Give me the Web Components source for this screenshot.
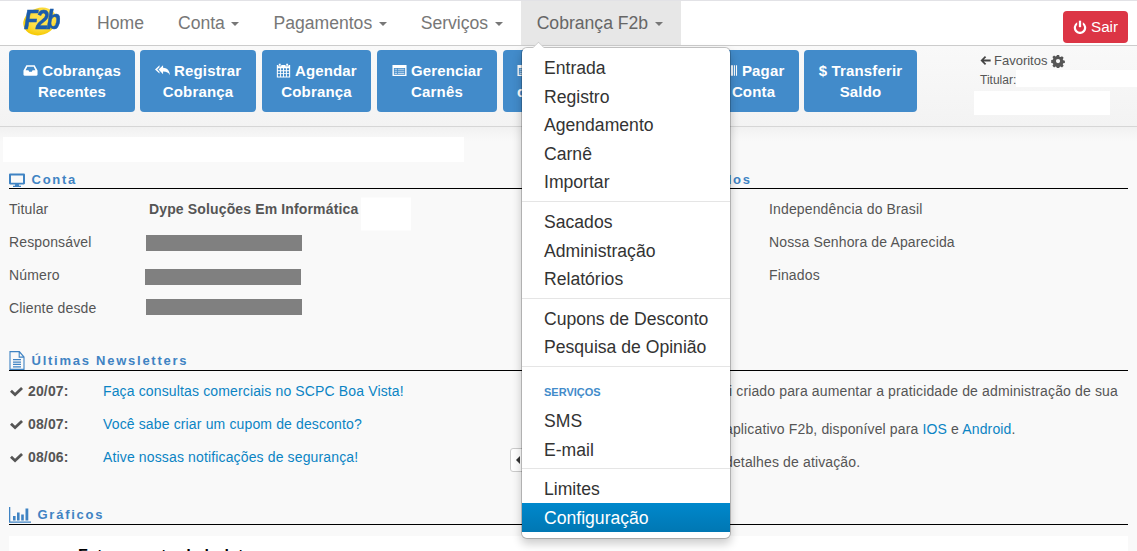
<!DOCTYPE html>
<html lang="pt-BR">
<head>
<meta charset="utf-8">
<title>F2b</title>
<style>
  html, body { margin: 0; height: 551px; overflow: hidden; background: #f9f9f9; }
  body { font: 14px/20px "Liberation Sans", Arial, sans-serif; color: #555; }
  a { color: #0b84c4; text-decoration: none; }
</style>
</head>
<body>
<app-page>
  <app-navbar slot="navbar">
    <nav-link>Home</nav-link>
    <nav-link caret>Conta</nav-link>
    <nav-link caret>Pagamentos</nav-link>
    <nav-link caret>Serviços</nav-link>
    <nav-link caret active>Cobrança F2b</nav-link>
    <sair-button slot="right">Sair</sair-button>
  </app-navbar>

  <dropdown-menu slot="menu">
    <menu-item>Entrada</menu-item>
    <menu-item>Registro</menu-item>
    <menu-item>Agendamento</menu-item>
    <menu-item>Carnê</menu-item>
    <menu-item>Importar</menu-item>
    <menu-divider style="--mb:6.25px"></menu-divider>
    <menu-item>Sacados</menu-item>
    <menu-item>Administração</menu-item>
    <menu-item>Relatórios</menu-item>
    <menu-divider style="--mb:6.1px"></menu-divider>
    <menu-item>Cupons de Desconto</menu-item>
    <menu-item>Pesquisa de Opinião</menu-item>
    <menu-divider style="--mb:0px"></menu-divider>
    <menu-item header>Serviços</menu-item>
    <menu-item>SMS</menu-item>
    <menu-item style="--lift:1px">E-mail</menu-item>
    <menu-divider style="--mb:5.75px"></menu-divider>
    <menu-item>Limites</menu-item>
    <menu-item active>Configuração</menu-item>
  </dropdown-menu>

  <tool-bar slot="toolbar">
    <tool-button icon="inbox" style="--w:126px">Cobranças<br>Recentes</tool-button>
    <tool-button icon="replyAll" style="--w:116px;margin-left:-1px">Registrar<br>Cobrança</tool-button>
    <tool-button icon="calendar" style="--w:109px">Agendar<br>Cobrança</tool-button>
    <tool-button icon="listAlt" style="--w:120px">Gerenciar<br>Carnês</tool-button>
    <tool-button icon="listAlt" style="--w:199px;--align:left;--pad:14px">Importar Arquivos<br>cobranças em lote</tool-button>
    <tool-button icon="barcode" style="--w:91px">Pagar<br>Conta</tool-button>
    <tool-button glyph="$" style="--w:113px;margin-left:-1px">Transferir<br>Saldo</tool-button>
    <favorites-panel slot="right"></favorites-panel>
  </tool-bar>

  <white-block style="--x:3px;--w:461px;--h:25px;margin-top:10px"></white-block>

  <two-columns style="margin-top:8px;--t:2px;--b:0px">
    <dash-section icon="desktop" heading="Conta">
      <info-row label="Titular"><b>Dype Soluções Em Informática</b><white-block style="--x:3px;--y:4.5px;--w:50px;--h:33px"></white-block></info-row>
      <info-row label="Responsável"><redact-bar style="--x:-3px;--y:1px"></redact-bar></info-row>
      <info-row label="Número"><redact-bar style="--x:-4px;--y:2px"></redact-bar></info-row>
      <info-row label="Cliente desde"><redact-bar style="--x:-3px;--y:-1px"></redact-bar></info-row>
    </dash-section>
    <dash-section icon="desktop" heading="Próximos Feriados" indent="14">
      <info-row label="07/09" label-width="200.5">Independência do Brasil</info-row>
      <info-row label="12/10" label-width="200.5">Nossa Senhora de Aparecida</info-row>
      <info-row label="02/11" label-width="200.5">Finados</info-row>
    </dash-section>
  </two-columns>

  <two-columns style="margin-top:27.5px;--b:1px">
    <dash-section icon="file" heading="Últimas Newsletters">
      <news-row date="20/07:"><a href="#">Faça consultas comerciais no SCPC Boa Vista!</a></news-row>
      <news-row date="08/07:"><a href="#">Você sabe criar um cupom de desconto?</a></news-row>
      <news-row date="08/06:"><a href="#">Ative nossas notificações de segurança!</a></news-row>
    </dash-section>
    <dash-section>
      <news-text style="--x:148.5px;--h:38px">foi criado para aumentar a praticidade de administração de sua</news-text>
      <news-text style="--x:156.5px">aplicativo F2b, disponível para <a href="#">IOS</a> e <a href="#">Android</a>.</news-text>
      <news-text style="--x:156.5px">detalhes de ativação.</news-text>
    </dash-section>
  </two-columns>

  <dash-section icon="chart" heading="Gráficos" style="margin:27.5px 9px 0;--b:1px">
    <chart-panel>Faturamento de boletos</chart-panel>
  </dash-section>

  <collapse-toggle slot="overlay"></collapse-toggle>
</app-page>

<script>
/** Inline glyphs, all drawn on a 16x16 box unless the caller passes a view box. */
const ICONS = {
  inbox: '<path fill-rule="evenodd" d="M3.600 2.500h8.800L15.500 8v4.200c0 .7-.5 1.300-1.200 1.300H1.700c-.7 0-1.200-.6-1.200-1.300V8zM4.600 4 2.800 7.600h3l.8 1.600h2.800l.8-1.600h3L11.400 4z"/>',
  replyAll: '<path d="M4.800 2.500v2L2.400 6.900l2.400 2.400v2L0 6.900z"/><path d="M8.600 2.500v2.600c4 .2 6.700 2.400 7.400 7.900-1.300-2.700-3.600-4-7.400-4v2.900L3.800 6.900z"/>',
  calendar: '<path fill-rule="evenodd" d="M3 .8h2v2H3zM10.900.8h2v2h-2zM.9 2h1.500v1.500h3.200V2h4.600v1.500h3.200V2h1.700v13.500H.9zM2 5.600v2.100h2.400V5.600zm3.400 0v2.100h2.100V5.600zm3.100 0v2.100h2.100V5.600zm3.100 0v2.100H14V5.600zM2 8.700v2.100h2.400V8.700zm3.400 0v2.100h2.100V8.700zm3.100 0v2.100h2.100V8.700zm3.100 0v2.100H14V8.700zM2 11.800v2.500h2.400v-2.500zm3.400 0v2.500h2.100v-2.500zm3.100 0v2.500h2.100v-2.500zm3.100 0v2.500H14v-2.500z"/>',
  listAlt: '<path fill-rule="evenodd" d="M.5 2.200h15v11.600H.5zM2 5.200v7.200h12V5.200z"/><path opacity=".65" d="M2.800 6h2.600v1.200H2.800zM6.200 6h7v1.200h-7zM2.800 8.200h2.600v1.200H2.800zM6.200 8.200h7v1.200h-7zM2.800 10.400h2.600v1.200H2.800zM6.200 10.400h7v1.200h-7z"/>',
  barcode: '<path d="M1 2.500h1.400v11H1zM3.400 2.500h2v11h-2zM6.400 2.500h1.200v11H6.400zM8.600 2.500h2v11h-2zM11.600 2.500h1.200v11h-1.200zM13.800 2.500H15v11h-1.200z"/>',
  power: '<path d="M6.700 .8h2.600v7.400H6.700z"/><path d="M11.200 2.600v2.900a4.600 4.600 0 1 1-6.400 0V2.600a7.100 7.100 0 1 0 6.400 0z"/>',
  arrowLeft: '<path d="M7.200 1.500 9 3.300 5.600 6.700H15.500v2.600H5.600L9 12.700l-1.800 1.800L.7 8z"/>',
  cog: '<path fill-rule="evenodd" d="M6.600.8h2.800l.4 2 1.300.6 1.800-1.100 2 2-1.100 1.800.6 1.300 2 .4v2.800l-2 .4-.6 1.300 1.100 1.800-2 2-1.800-1.100-1.300.6-.4 2H6.600l-.4-2-1.300-.6-1.800 1.100-2-2 1.100-1.800-.6-1.300-2-.4V6.900l2-.4.6-1.300L1.100 3.400l2-2 1.800 1.100 1.300-.6zM8 5.600a2.600 2.600 0 1 0 0 5.200 2.600 2.600 0 0 0 0-5.200z" transform="translate(.6 .4) scale(.93)"/>',
  desktop: '<path fill-rule="evenodd" d="M1.200 1.500h13.600c.6 0 1.200.5 1.200 1.200v8.600c0 .7-.6 1.200-1.200 1.200H9.800l.3 1.300h1.900v1.200H4v-1.200h1.900l.3-1.300H1.200c-.6 0-1.200-.5-1.200-1.200V2.700c0-.7.6-1.200 1.200-1.200zm.8 1.900v7.300h12V3.400z"/>',
  file: '<path fill="none" stroke="currentColor" stroke-width="1.100" d="M1 .6h9.400L15 5v10.400H1zM10.200 .6v4.600H15"/><path d="M4 6.800h8v1H4zM4 8.800h8v1H4zM4 10.800h8v1H4zM4 12.800h8v1H4z"/>',
  chart: '<path d="M0 0h1.300v14.600H22v1.200H0z"/><path d="M4 9h2.600v4.500H4zM8 5.500h2.600v8H8zM12.200 7.500h2.600v6h-2.600zM16.500 1.500h2.800v12h-2.800z"/>',
  check: '<path d="M13.600 2.600 16 5l-9.800 9L0 8.200l2.400-2.400 3.800 3.600z"/>'
};

/**
 * Builds the markup of an inline icon.
 * @param {string} name - Key in ICONS.
 * @param {number} width - Width in pixels.
 * @param {number} height - Height in pixels.
 * @param {string} viewBox - SVG view box.
 * @returns {string} The svg markup.
 */
function icon (name, width, height, viewBox = '0 0 16 16') {
  return `<svg width="${width}" height="${height}" viewBox="${viewBox}" preserveAspectRatio="none" fill="currentColor" aria-hidden="true">${ICONS[name]}</svg>`;
}

/** Base class: open shadow root filled once from getTemplate(). */
class BaseElement extends HTMLElement {
  constructor () {
    super();
    this.attachShadow({ mode: 'open' }).innerHTML = this.getTemplate();
  }

  getTemplate () {
    return '<slot></slot>';
  }
}

/** Page shell: bars on top, content flow under them, overlays on top of all. */
class AppPage extends BaseElement {
  getTemplate () {
    return `
      <style>
        :host { display: block; position: relative; height: 551px; overflow: hidden; letter-spacing: .14px; }
        .content { background: linear-gradient(#f1f1f1, #f9f9f9 14px); height: 424px; display: flow-root; }
      </style>
      <slot name="navbar"></slot>
      <slot name="toolbar"></slot>
      <div class="content"><slot></slot></div>
      <slot name="menu"></slot>
      <slot name="overlay"></slot>
    `;
  }
}

/** Top navigation bar with the logo and the links. */
class AppNavbar extends BaseElement {
  getTemplate () {
    return `
      <style>
        :host {
          display: flex; height: 44px; background: #fff; letter-spacing: 0;
          border-top: 1px solid #e2e2e6; border-bottom: 1px solid #ccc;
        }
        .brand { width: 80px; flex: none; position: relative; }
        .blob {
          position: absolute; left: 23px; top: 7px; width: 34px; height: 27px; border-radius: 50%;
          background: radial-gradient(ellipse at 60% 45%, #ffe14a 40%, #f5c800 75%, #e8b900);
          transform: rotate(-18deg);
        }
        .mark {
          position: absolute; left: 24px; top: 4px;
          font: italic bold 27px/30px "Liberation Sans", Arial, sans-serif;
          letter-spacing: -2.5px; color: #1b5cab; -webkit-text-stroke: .5px #1b5cab;
          transform: scaleX(.85); transform-origin: left; filter: blur(.4px);
        }
        .right { margin-left: auto; display: flex; }
      </style>
      <div class="brand"><span class="blob"></span><span class="mark">F2b</span></div>
      <slot></slot>
      <div class="right"><slot name="right"></slot></div>
    `;
  }
}

/** Link of the top bar, optionally with a caret or in the open state. */
class NavLink extends BaseElement {
  getTemplate () {
    return `
      <style>
        :host {
          display: flex; align-items: center; gap: 6.5px; padding: 0 17px; height: 44px;
          font-size: 17.6px; color: #777; white-space: nowrap;
        }
        :host([active]) { background: #e7e7e7; color: #666; margin-left: 1px; padding: 0 16px; width: 128px; }
        .caret { display: none; width: 0; height: 0; border: 4.5px solid transparent; border-top-color: #777; border-bottom: 0; margin-top: 2px; }
        :host([caret]) .caret { display: block; }
      </style>
      <slot></slot><span class="caret"></span>
    `;
  }
}

/** Red logout button of the top bar. */
class SairButton extends BaseElement {
  getTemplate () {
    return `
      <style>
        :host {
          display: flex; align-items: center; gap: 4px; box-sizing: border-box;
          height: 32px; margin: 10px 9px 0 0; padding: 0 10px; width: 65px;
          background: #dc3545; color: #fff; border-radius: 4px; font-size: 15.2px;
        }
        svg { flex: none; }
      </style>
      ${icon('power', 14, 14)}<slot></slot>
    `;
  }
}

/** Row of big blue shortcuts under the top bar. */
class ToolBar extends BaseElement {
  getTemplate () {
    return `
      <style>
        :host {
          display: flex; gap: 6px; box-sizing: border-box; height: 81px; padding: 4px 0 0 9px;
          background: linear-gradient(#f9f9f9, #f3f3f3); border-bottom: 1px solid #d6d6d6;
          position: relative;
        }
        .right { position: absolute; left: 974px; top: 0; right: 0; }
      </style>
      <slot></slot>
      <div class="right"><slot name="right"></slot></div>
    `;
  }
}

/** One blue shortcut: icon or glyph on the first line, two lines of text. */
class ToolButton extends BaseElement {
  getTemplate () {
    const iconName = this.getAttribute('icon');
    const glyph = this.getAttribute('glyph');
    const lead = iconName ? icon(iconName, 15, 15) : `<span class="glyph">${glyph}</span>`;
    return `
      <style>
        :host {
          display: block; flex: none; box-sizing: border-box; width: var(--w); height: 62px;
          background: #428bca; color: #fff; border-radius: 4px;
          padding: 9.5px 0 0 var(--pad, 0);
          font-weight: bold; font-size: 15px; line-height: 21px; text-align: var(--align, center);
          letter-spacing: .15px; white-space: nowrap;
        }
        svg { vertical-align: -2px; }
      </style>
      ${lead}
      <slot></slot>
    `;
  }
}

/** Favourites box at the right end of the toolbar. */
class FavoritesPanel extends BaseElement {
  getTemplate () {
    return `
      <style>
        :host { display: block; font-size: 13px; color: #555; line-height: 15px; letter-spacing: 0; }
        .title { display: flex; align-items: center; gap: 3px; padding: 6px 0 0 6px; height: 17px; }
        .title svg:first-child { color: #444; }
        .title svg:last-child { margin-left: 1px; }
        .row { display: flex; margin-top: 1px; height: 17px; padding-left: 6px; align-items: flex-end; font-size: 12px; }
        .row span { line-height: 13px; }
        .patch { background: #fff; flex: 1; height: 17px; }
        .box { background: #fff; width: 136px; height: 24px; margin-top: 4px; }
      </style>
      <div class="title">${icon('arrowLeft', 11, 11)}<span>Favoritos</span>${icon('cog', 14, 14)}</div>
      <div class="row"><span>Titular:</span><div class="patch"></div></div>
      <div class="box"></div>
    `;
  }
}

/** Plain white rectangle that covers removed data. */
class WhiteBlock extends BaseElement {
  getTemplate () {
    return `
      <style>
        :host {
          display: block; flex: none; width: var(--w); height: var(--h);
          margin-left: var(--x, 0); transform: translateY(var(--y, 0)); background: #fff;
        }
      </style>
    `;
  }
}

/** Grey rectangle that covers personal data. */
class RedactBar extends BaseElement {
  getTemplate () {
    return `
      <style>
        :host {
          display: block; flex: none; width: 156px; height: 16px;
          margin-left: var(--x, 0); transform: translateY(var(--y, 0)); background: #808080;
        }
      </style>
    `;
  }
}

/** Two equal columns inside the page gutter. */
class TwoColumns extends BaseElement {
  getTemplate () {
    return `
      <style>
        :host { display: grid; grid-template-columns: 1fr 1fr; margin: 0 9px; }
      </style>
      <slot></slot>
    `;
  }
}

/** Dashboard section: underlined blue heading over its rows. */
class DashSection extends BaseElement {
  getTemplate () {
    const name = this.getAttribute('icon');
    const heading = this.getAttribute('heading') || '';
    const indent = this.getAttribute('indent') || 0;
    const wide = name === 'chart';
    const mark = name ? icon(name, wide ? 22 : 16, wide ? 16 : (name === 'file' ? 19 : 16), wide ? '0 0 22 16' : '0 0 16 16') : '';
    return `
      <style>
        :host { display: block; }
        h2 {
          display: flex; align-items: center; gap: 6.5px; margin: 0; box-sizing: border-box; height: 19px;
          padding: var(--t, 0px) 0 var(--b, 2px) ${indent}px;
          border-bottom: 1px solid #000; color: #3f83c3;
          font-size: 13px; line-height: 16px; font-weight: bold; letter-spacing: 1.75px;
        }
        svg { flex: none; }
        .rows { padding-top: 3.5px; }
      </style>
      <h2>${mark}<span>${heading}</span></h2>
      <div class="rows"><slot></slot></div>
    `;
  }
}

/** Label and value, 33px high. */
class InfoRow extends BaseElement {
  getTemplate () {
    const width = this.getAttribute('label-width') || 140;
    return `
      <style>
        :host { display: flex; align-items: center; height: 33px; }
        .label { width: ${width}px; flex: none; }
      </style>
      <span class="label">${this.getAttribute('label')}</span><slot></slot>
    `;
  }
}

/** Newsletter line: check mark, bold date, link. */
class NewsRow extends BaseElement {
  getTemplate () {
    return `
      <style>
        :host { display: flex; align-items: center; height: 33px; }
        svg { margin: 0 5px 0 1px; flex: none; color: #555; }
        b { width: 75px; flex: none; }
      </style>
      ${icon('check', 13, 13)}<b>${this.getAttribute('date')}</b><slot></slot>
    `;
  }
}

/** Text line of the right column, its start hidden under the open menu. */
class NewsText extends BaseElement {
  getTemplate () {
    return `
      <style>
        :host {
          display: block; box-sizing: border-box; height: var(--h, 33px);
          padding: 6.5px 0 0 var(--x); white-space: nowrap;
        }
      </style>
      <slot></slot>
    `;
  }
}

/** White panel holding the charts; only its top is on screen. */
class ChartPanel extends BaseElement {
  getTemplate () {
    return `
      <style>
        :host {
          display: block; margin-top: 7.5px; height: 60px; background: #fff; padding: 10px 0 0 69px;
          font-weight: bold; font-size: 16px; color: #000;
        }
      </style>
      <slot></slot>
    `;
  }
}

/** Open dropdown of the "Cobrança F2b" link. */
class DropdownMenu extends BaseElement {
  getTemplate () {
    return `
      <style>
        :host {
          display: block; position: absolute; left: 521px; top: 47px; width: 208px; height: 490px;
          box-sizing: content-box; background: #fff; border: 1px solid rgba(0,0,0,.2); border-radius: 6px;
          box-shadow: 0 5px 10px rgba(0,0,0,.2); background-clip: padding-box; z-index: 5; letter-spacing: 0;
        }
        .arrow {
          position: absolute; left: 11px; top: -6px; width: 10px; height: 10px; background: #fff;
          border: 1px solid rgba(0,0,0,.2); border-width: 1px 0 0 1px; transform: rotate(45deg) scale(.75);
        }
        .list { padding-top: 6px; position: relative; }
      </style>
      <span class="arrow"></span>
      <div class="list"><slot></slot></div>
    `;
  }
}

/** Entry of the dropdown: link, section header or selected link. */
class MenuItem extends BaseElement {
  getTemplate () {
    return `
      <style>
        :host {
          display: block; height: 28.5px; line-height: calc(28.5px + var(--lift, 0px) * 2); padding-left: 22px;
          font-size: 17.6px; color: #333; white-space: nowrap;
        }
        :host([header]) {
          font-size: 11px; font-weight: bold; color: #428bca; text-transform: uppercase;
          margin-top: 11.4px;
        }
        :host([active]) {
          color: #fff; background: linear-gradient(#0088cc, #0077b3);
          margin-top: -.5px; height: 29px; line-height: 31px;
        }
      </style>
      <slot></slot>
    `;
  }
}

/** Thin line between groups of the dropdown. */
class MenuDivider extends BaseElement {
  getTemplate () {
    return `
      <style>
        :host { display: block; height: 1px; margin: 4.25px 0 var(--mb, 6px); background: #e5e5e5; }
      </style>
    `;
  }
}

/** Small button on the column border, mostly under the menu. */
class CollapseToggle extends BaseElement {
  getTemplate () {
    return `
      <style>
        :host {
          display: block; position: absolute; left: 510px; top: 448px; width: 20px; height: 22px;
          background: #fff; border: 1px solid #ccc; border-radius: 3px;
        }
        span {
          position: absolute; left: 5px; top: 7px; width: 0; height: 0;
          border: 4px solid transparent; border-right-color: #333; border-left: 0;
        }
      </style>
      <span></span>
    `;
  }
}

const elements = {
  'app-page': AppPage,
  'app-navbar': AppNavbar,
  'nav-link': NavLink,
  'sair-button': SairButton,
  'tool-bar': ToolBar,
  'tool-button': ToolButton,
  'favorites-panel': FavoritesPanel,
  'white-block': WhiteBlock,
  'redact-bar': RedactBar,
  'two-columns': TwoColumns,
  'dash-section': DashSection,
  'info-row': InfoRow,
  'news-row': NewsRow,
  'news-text': NewsText,
  'chart-panel': ChartPanel,
  'dropdown-menu': DropdownMenu,
  'menu-item': MenuItem,
  'menu-divider': MenuDivider,
  'collapse-toggle': CollapseToggle
};

Object.entries(elements).forEach(([name, element]) => customElements.define(name, element));
</script>
</body>
</html>
